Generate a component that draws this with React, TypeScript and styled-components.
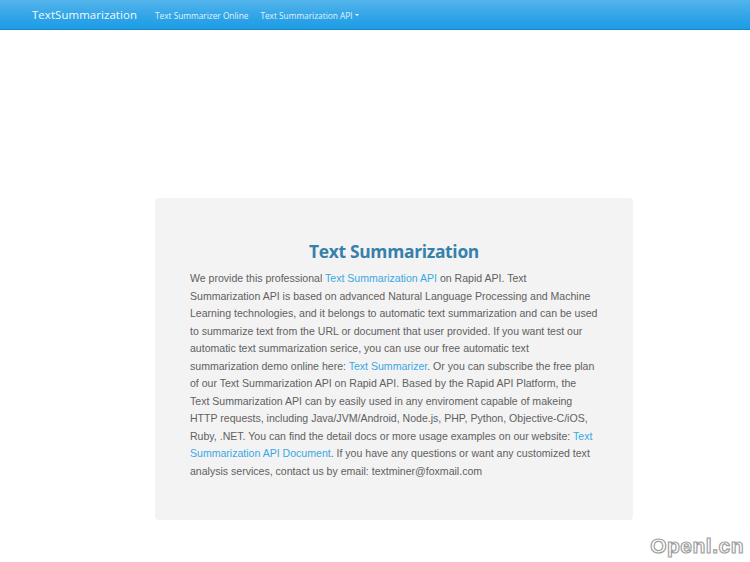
import React from 'react';
import styled, { createGlobalStyle } from 'styled-components';

const GlobalStyle = createGlobalStyle`
  html, body {
    margin: 0;
    padding: 0;
    background: #ffffff;
  }
  body {
    font-family: "Liberation Sans", Arial, sans-serif;
    color: #555555;
  }
  * { box-sizing: border-box; }
`;

export default function App() {
  // line breaks follow the reference exactly
  const lines: React.ReactNode[] = [
    <>We provide this professional <Link>Text Summarization API</Link> on Rapid API. Text</>,
    <>Summarization API is based on advanced Natural Language Processing and Machine</>,
    <>Learning technologies, and it belongs to automatic text summarization and can be used</>,
    <>to summarize text from the URL or document that user provided. If you want test our</>,
    <>automatic text summarization serice, you can use our free automatic text</>,
    <>summarization demo online here: <Link>Text Summarizer</Link>. Or you can subscribe the free plan</>,
    <>of our Text Summarization API on Rapid API. Based by the Rapid API Platform, the</>,
    <>Text Summarization API can by easily used in any enviroment capable of makeing</>,
    <>HTTP requests, including Java/JVM/Android, Node.js, PHP, Python, Objective-C/iOS,</>,
    <>Ruby, .NET. You can find the detail docs or more usage examples on our website: <Link>Text</Link></>,
    <><Link>Summarization API Document</Link>. If you have any questions or want any customized text</>,
    <>analysis services, contact us by email: textminer@foxmail.com</>,
  ];

  return (
    <Page>
      <GlobalStyle />
      <Navbar>
        <Brand>TextSummarization</Brand>
        <NavLinks>
          <NavLink>Text Summarizer Online</NavLink>
          <NavLink>
            Text Summarization API<Caret />
          </NavLink>
        </NavLinks>
      </Navbar>

      <AdSpace />

      <Jumbotron>
        <Title>Text Summarization</Title>
        <Body>
          {lines.map((l, i) => (
            <Line key={i}>{l}</Line>
          ))}
        </Body>
      </Jumbotron>

      <Watermark>Openl.cn</Watermark>
    </Page>
  );
}

const Page = styled.div`
  position: relative;
  width: 750px;
  height: 562px;
  overflow: hidden;
`;

const Navbar = styled.nav`
  height: 30px;
  display: flex;
  align-items: center;
  padding-left: 32px;
  background: linear-gradient(180deg, #54b4eb 0%, #2fa4e7 60%, #1d9ce5 100%);
  border-bottom: 1px solid #178acc;
`;

const Brand = styled.div`
  font-family: "Open Sans", "DejaVu Sans", sans-serif;
  font-size: 11.4px;
  color: #f4fafe;
  letter-spacing: 0.1px;
`;

const NavLinks = styled.div`
  display: flex;
  gap: 12px;
  margin-left: 18px;
  padding-top: 1px;
`;

const NavLink = styled.span`
  display: flex;
  align-items: center;
  font-family: "Open Sans", "DejaVu Sans", sans-serif;
  font-size: 8.3px;
  color: #e3f2fc;
`;

const Caret = styled.span`
  width: 0;
  height: 0;
  margin-left: 2px;
  border-left: 2.5px solid transparent;
  border-right: 2.5px solid transparent;
  border-top: 2.5px solid #ffffff;
`;

const AdSpace = styled.div`
  height: 168px;
`;

const Jumbotron = styled.section`
  width: 478px;
  height: 322px;
  margin-left: 155px;
  padding: 41px 35px 0 35px;
  background: #f3f3f3;
  border-radius: 4px;
`;

const Title = styled.h1`
  margin: 0 0 7px 0;
  text-align: center;
  font-family: "Open Sans", "DejaVu Sans", sans-serif;
  font-weight: 700;
  font-size: 17.4px;
  letter-spacing: -0.3px;
  color: #3680ab;
`;

const Body = styled.div`
  font-size: 10.55px;
  line-height: 17.55px;
  color: #616161;
`;

const Line = styled.div`
  white-space: nowrap;
`;

const Link = styled.span`
  color: #3aa8e3;
`;

const Watermark = styled.div`
  position: absolute;
  right: 6px;
  bottom: 4px;
  font-family: "Liberation Sans", Arial, sans-serif;
  font-size: 21px;
  font-weight: 700;
  color: #ffffff;
  -webkit-text-stroke: 1.2px #a0a0a0;
  letter-spacing: 0.5px;
`;
